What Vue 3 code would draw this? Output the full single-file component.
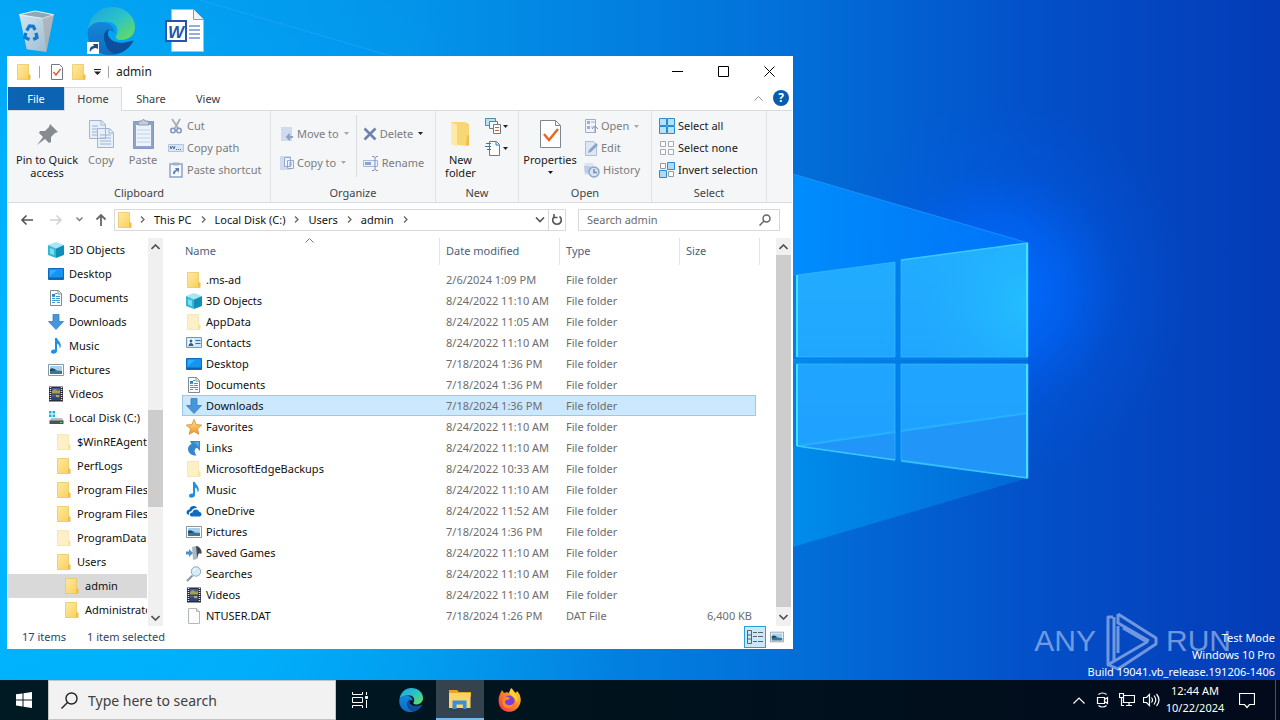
<script setup>
import { ref } from 'vue'

const tabs = ['Home', 'Share', 'View']
const crumbs = ['This PC', 'Local Disk (C:)', 'Users', 'admin']

const tree = [
  { name: '3D Objects', icon: 'cube', level: 0 },
  { name: 'Desktop', icon: 'desktop', level: 0 },
  { name: 'Documents', icon: 'doc', level: 0 },
  { name: 'Downloads', icon: 'down', level: 0 },
  { name: 'Music', icon: 'music', level: 0 },
  { name: 'Pictures', icon: 'pictures', level: 0 },
  { name: 'Videos', icon: 'videos', level: 0 },
  { name: 'Local Disk (C:)', icon: 'disk', level: 0 },
  { name: '$WinREAgent', icon: 'folder-dim', level: 1 },
  { name: 'PerfLogs', icon: 'folder', level: 1 },
  { name: 'Program Files', icon: 'folder', level: 1 },
  { name: 'Program Files (x86)', icon: 'folder', level: 1 },
  { name: 'ProgramData', icon: 'folder-dim', level: 1 },
  { name: 'Users', icon: 'folder', level: 1 },
  { name: 'admin', icon: 'folder', level: 2, active: true },
  { name: 'Administrator', icon: 'folder', level: 2 }
]

const folder = (name, icon, date) => ({ name, icon, date, type: 'File folder', size: '' })
const files = [
  folder('.ms-ad', 'folder', '2/6/2024 1:09 PM'),
  folder('3D Objects', 'cube', '8/24/2022 11:10 AM'),
  folder('AppData', 'folder-dim', '8/24/2022 11:05 AM'),
  folder('Contacts', 'contacts', '8/24/2022 11:10 AM'),
  folder('Desktop', 'desktop', '7/18/2024 1:36 PM'),
  folder('Documents', 'doc', '7/18/2024 1:36 PM'),
  folder('Downloads', 'down', '7/18/2024 1:36 PM'),
  folder('Favorites', 'star', '8/24/2022 11:10 AM'),
  folder('Links', 'link', '8/24/2022 11:10 AM'),
  folder('MicrosoftEdgeBackups', 'folder-dim', '8/24/2022 10:33 AM'),
  folder('Music', 'music', '8/24/2022 11:10 AM'),
  folder('OneDrive', 'cloud', '8/24/2022 11:52 AM'),
  folder('Pictures', 'pictures', '7/18/2024 1:36 PM'),
  folder('Saved Games', 'games', '8/24/2022 11:10 AM'),
  folder('Searches', 'lens', '8/24/2022 11:10 AM'),
  folder('Videos', 'videos', '8/24/2022 11:10 AM'),
  { name: 'NTUSER.DAT', icon: 'file', date: '7/18/2024 1:26 PM', type: 'DAT File', size: '6,400 KB' }
]
const selected = ref('Downloads')
</script>

<template>
  <div class="screen">
    <svg class="defs" aria-hidden="true">
      <defs>
        <linearGradient id="g-folder" x1="0" y1="0" x2="1" y2="1">
          <stop offset="0" stop-color="#ffe9a6" /><stop offset="1" stop-color="#f8cf55" />
        </linearGradient>
        <linearGradient id="g-edge1" x1="0" y1="0" x2="1" y2="1">
          <stop offset="0" stop-color="#1aa3e0" /><stop offset="0.5" stop-color="#2bc3c9" /><stop offset="1" stop-color="#6ee04a" />
        </linearGradient>
        <linearGradient id="g-edge2" x1="0" y1="0" x2="0" y2="1">
          <stop offset="0" stop-color="#1587d8" /><stop offset="1" stop-color="#0b6cc4" />
        </linearGradient>
        <linearGradient id="g-fox" x1="1" y1="0" x2="0" y2="1">
          <stop offset="0" stop-color="#ffe13b" /><stop offset="0.45" stop-color="#ff8a1f" /><stop offset="1" stop-color="#f0265e" />
        </linearGradient>
        <linearGradient id="g-bin" x1="0" y1="0" x2="1" y2="1">
          <stop offset="0" stop-color="#e4eef5" /><stop offset="1" stop-color="#a7b8c6" />
        </linearGradient>
        <linearGradient id="g-star" x1="0" y1="0" x2="0" y2="1">
          <stop offset="0" stop-color="#ffe08a" /><stop offset="1" stop-color="#f0942c" />
        </linearGradient>
      </defs>
      <symbol id="i-folder" viewBox="0 0 16 16">
        <path d="M1.500 .5h11v10l1.500.5v4.500H1.500z" fill="url(#g-folder)" stroke="#e9c153" stroke-width=".7" />
        <path d="M12 15.500v-4l1-1.500 1.300 1.500v4z" fill="#efc046" />
      </symbol>
      <symbol id="i-folder-dim" viewBox="0 0 16 16">
        <path d="M1.500 .5h11v10l1.500.5v4.500H1.500z" fill="#fdf0c6" stroke="#f3dfa4" stroke-width=".7" />
        <path d="M12 15.500v-4l1-1.500 1.300 1.500v4z" fill="#f6e3a8" />
      </symbol>
      <symbol id="i-cube" viewBox="0 0 16 16">
        <path d="M8 0l8 3-8 3.500L0 3z" fill="#a5e7f2" /><path d="M0 3l8 3.500V16l-8-3z" fill="#35b6d3" /><path d="M16 3L8 6.500V16l8-3z" fill="#0f8fb8" />
        <path d="M2 6l4 1.600v5.600l-4-1.600z" fill="#7fdcec" />
      </symbol>
      <symbol id="i-desktop" viewBox="0 0 16 16">
        <path d="M.5 2.500h15v11H.5z" fill="#1496f0" stroke="#1169ba" /><path d="M1 11.500h14V13H1z" fill="#0b61b3" /><path d="M2 4h7l-7 6z" fill="#32adff" />
      </symbol>
      <symbol id="i-doc" viewBox="0 0 16 16">
        <path d="M2.500.5h8l3 3v12h-11z" fill="#fff" stroke="#7f8b94" /><path d="M10 1v3h3" fill="none" stroke="#7f8b94" />
        <path d="M7 3.500h2M4 6.500h3m1 0h4M4 8.500h3m1 0h4M4 10.500h8M4 12.500h3m2 0h3" stroke="#3f9bd0" />
        <path d="M4 4h3v2H4z" fill="#2d83bd" />
      </symbol>
      <symbol id="i-down" viewBox="0 0 16 16">
        <path d="M5 .500h6v7h4.500L8 15.500.500 7.500H5z" fill="#4796dc" stroke="#357fc6" stroke-width=".8" />
      </symbol>
      <symbol id="i-music" viewBox="0 0 16 16">
        <path d="M7 0h2c.3 2.500 4 4 3.800 8-.1 1.200-.7 2-1.300 2.600C12 7.500 10.500 6 9 5.500V13c0 3-6 4-6 .8 0-2 2.400-2.700 4-2.200z" fill="#1c8fe8" />
      </symbol>
      <symbol id="i-pictures" viewBox="0 0 16 16">
        <path d="M.500 2.500h15v11H.500z" fill="#fff" stroke="#8b98a3" /><path d="M2 4h12v8H2z" fill="#a6d2ef" />
        <path d="M2 8c3-2 5 1 12 1v3H2z" fill="#3e7595" /><path d="M2 7c2-2 5 0 6 1l-3 1H2z" fill="#1d4b66" />
      </symbol>
      <symbol id="i-videos" viewBox="0 0 16 16">
        <path d="M1 .5h14v15H1z" fill="#2b2d38" /><path d="M2.500 1v14M13.500 1v14" stroke="#dfe3e8" stroke-width="1.500" stroke-dasharray="1 1" />
        <path d="M4 2h8v5.500H4zM4 8.500h8V14H4z" fill="#4e5f9e" /><path d="M4 5l3-2 3 2 2-1v3.500H4z" fill="#a2a053" /><path d="M4 11l3-1 3 2 2-1v3H4z" fill="#2e4778" /><path d="M8 9h3v2H8z" fill="#c5a657" />
      </symbol>
      <symbol id="i-disk" viewBox="0 0 16 16">
        <path d="M1 1h2.500v2.500H1zm3.500 0H7v2.500H4.500zM1 4.500h2.500V7H1zm3.500 0H7V7H4.500z" fill="#19b4dc" />
        <path d="M3 8h11l1.500 3H1.500z" fill="#b9bec2" /><path d="M1.500 10.500h14V14h-14z" fill="#4c5358" /><path d="M12 12h2v1h-2z" fill="#53e05a" />
      </symbol>
      <symbol id="i-contacts" viewBox="0 0 16 16">
        <path d="M.5 2.500h15v10H.5z" fill="#cfe7f8" stroke="#6a9cc4" /><path d="M2 4h6v7H2z" fill="#fff" /><circle cx="5" cy="6" r="1.500" fill="#335f85" /><path d="M2.500 11c0-4 5-4 5 0z" fill="#335f85" /><path d="M9.500 5.500h5m-5 3h5" stroke="#2f6fa8" />
      </symbol>
      <symbol id="i-star" viewBox="0 0 16 16">
        <path d="M8 .5l2.200 5.100 5.500.5-4.200 3.700 1.300 5.500L8 12.500l-4.800 2.800 1.300-5.500L.3 6.100l5.500-.5z" fill="url(#g-star)" stroke="#d58a35" stroke-width=".8" />
      </symbol>
      <symbol id="i-link" viewBox="0 0 16 16">
        <path d="M4 1h10v10l-3-3.200C8 9 8 12 10.500 15.500 6 16 2 13 2 9c0-2.500 1.500-4 3.500-5z" fill="#3686cd" /><path d="M8 2h5v5z" fill="#5ea7e3" />
      </symbol>
      <symbol id="i-cloud" viewBox="0 0 16 16">
        <path d="M1 11C-.5 8 2 6.500 3.500 6.500 4 2.500 9.500 2 11 5c-5-.5-5 3.500-6.500 3.500C2.500 9 3 11 3 12z" fill="#0b67ba" />
        <path d="M5.500 13.500C2.500 13 4 9 6.500 9.500c.5-4 6-3.500 6.500-.8 3.500.3 3 4.800.5 4.800z" fill="#0e6cc4" />
      </symbol>
      <symbol id="i-games" viewBox="0 0 16 16">
        <path d="M6 2l4-1 1 13-4 1z" fill="#aab8c1" /><path d="M10 1c4 0 7 6 5 8-1-1-2-1-3 1l-1 4z" fill="#41494f" />
        <path d="M0 6.500h3V4l4 4-4 4V9.500H0z" fill="#4b8fc7" />
      </symbol>
      <symbol id="i-lens" viewBox="0 0 16 16">
        <path d="M6.500 9.500L1 15" stroke="#8696a2" stroke-width="2" /><circle cx="10" cy="5.500" r="4.700" fill="#d3ecfb" stroke="#93a8b7" /><path d="M7.500 5a3 3 0 013-2.500" stroke="#fff" fill="none" />
      </symbol>
      <symbol id="i-file" viewBox="0 0 16 16">
        <path d="M2.500.5h8l3 3v12h-11z" fill="#fdfdfd" stroke="#b4b7ba" /><path d="M10.500.5v3h3" fill="none" stroke="#b4b7ba" />
      </symbol>
      <symbol id="i-caret" viewBox="0 0 5 3"><path d="M0 0h5L2.500 3z" fill="currentColor" /></symbol>
      <symbol id="i-edge" viewBox="0 0 48 48">
        <path d="M1 22C3 9 12 0 25 0c13 0 23 9 23 20 0 8-6 13-14 13-4 0-6-2-5-4 3-4 2-13-7-14C12 14 4 17 1 22z" fill="url(#g-edge1)" />
        <path d="M1 22c4-7 14-9 21-5 4 2 6 6 5 9-2-4-9-2-10 5-1 8 5 14 13 16C13 52-2 39 1 22z" fill="url(#g-edge2)" />
        <path d="M17 31c-1-4 2-8 5-9-4 7 3 18 22 12 2-.7 3 0 2 1-5 8-12 12-18 12-7-2-11-9-11-16z" fill="#0c4f9c" />
      </symbol>
    </svg>

    <main class="desktop">
      <svg class="wallpaper" viewBox="0 0 1280 680" preserveAspectRatio="none" aria-hidden="true">
        <defs>
          <linearGradient id="w-base" x1="0" x2="1" y1="0" y2="0">
            <stop offset="0" stop-color="#03a4f2" /><stop offset=".32" stop-color="#0394ea" /><stop offset=".62" stop-color="#026fd8" /><stop offset=".8" stop-color="#0351ca" /><stop offset="1" stop-color="#043bb6" />
          </linearGradient>
          <radialGradient id="w-cyan" gradientUnits="userSpaceOnUse" cx="0" cy="480" r="640">
            <stop offset="0" stop-color="#00b8ff" /><stop offset=".5" stop-color="#00b2fd" stop-opacity=".8" /><stop offset="1" stop-color="#00a0f0" stop-opacity="0" />
          </radialGradient>
          <linearGradient id="w-beam" gradientUnits="userSpaceOnUse" x1="200" x2="1028" y1="0" y2="0">
            <stop offset="0" stop-color="#0098ff" stop-opacity="0" /><stop offset=".7" stop-color="#0090ff" stop-opacity=".95" /><stop offset="1" stop-color="#007cff" stop-opacity=".7" />
          </linearGradient>
          <linearGradient id="w-low" gradientUnits="userSpaceOnUse" x1="340" x2="1028" y1="0" y2="0">
            <stop offset="0" stop-color="#009cf5" stop-opacity="0" /><stop offset=".65" stop-color="#0090ee" stop-opacity=".9" /><stop offset="1" stop-color="#0076dd" stop-opacity=".6" />
          </linearGradient>
          <radialGradient id="w-glow" gradientUnits="userSpaceOnUse" cx="1000" cy="290" r="190">
            <stop offset="0" stop-color="#006eff" /><stop offset=".35" stop-color="#0066fa" stop-opacity=".7" /><stop offset=".65" stop-color="#005df0" stop-opacity=".22" /><stop offset="1" stop-color="#0058e8" stop-opacity="0" />
          </radialGradient>
          <linearGradient id="w-pane" x1="0" y1="0" x2="0" y2="1">
            <stop offset="0" stop-color="#22adff" /><stop offset="1" stop-color="#1e9fff" />
          </linearGradient>
          <radialGradient id="w-shine" gradientUnits="userSpaceOnUse" cx="1028" cy="303" r="110">
            <stop offset="0" stop-color="#24c4ff" stop-opacity=".8" /><stop offset="1" stop-color="#24b4ff" stop-opacity="0" />
          </radialGradient>
        </defs>
        <path d="M0 0h1280v680H0z" fill="url(#w-base)" />
        <path d="M0 0h1280v680H0z" fill="url(#w-cyan)" />
        <path d="M780 60h440v440H780z" fill="url(#w-glow)" />
        <path d="M200 0l828 243v117H200z" fill="url(#w-beam)" />
        <path d="M340 360h688v118L340 680z" fill="url(#w-low)" />
        <path d="M200 0l828 243" stroke="#2aa5ff" stroke-width="1" opacity=".6" />
        <path d="M793 276l235-34v117H793zM793 364h235v115l-235-33z" fill="#0080ea" />
        <path d="M797 275l98-13v95h-98zM901 260l127-17v114H901zM797 364h98v96l-98-14zM901 364h127v114l-127-18z" fill="url(#w-pane)" />
        <path d="M901 260l127-17v114H901z" fill="url(#w-shine)" />
        <path d="M797 446l98-14v28zM901 431l127-18v65l-127-18z" fill="#2196f8" />
        <path d="M797 446l98-14m6-1l127-18" stroke="#27b8ff" stroke-width="2" opacity=".8" />
        <path d="M797 275l98-13v95h-98zM901 260l127-17v114H901zM797 364h98v96l-98-14zM901 364h127v114l-127-18z" fill="none" stroke="#3abaff" opacity=".7" />
        <path d="M797 275v82m0 7v82M1027 478V364m0-7V243" fill="none" stroke="#43e0ff" stroke-width="2" />
        <path d="M797 446l98 14m6 1l127 17M901 260l127-17" fill="none" stroke="#3fd0ff" stroke-width="1.500" opacity=".8" />
      </svg>

      <nav class="shortcuts" aria-label="Desktop">
        <button aria-label="Recycle Bin">
          <svg width="38" height="43" viewBox="0 0 40 46">
            <path d="M1 5l8 37 21 3 8-40-20-4z" fill="url(#g-bin)" opacity=".92" /><path d="M1 5l17-4 20 4-12 4z" fill="#90a9b8" stroke="#edf5fa" /><path d="M26 9l4 36 8-40z" fill="#a99e9c" opacity=".5" />
            <path d="M9 22l3-5 4 .5 2 4m1 3l1 5-4 2m-4 0l-5-2 1-5" fill="none" stroke="#1478cf" stroke-width="3.500" />
          </svg>
        </button>
        <button aria-label="Microsoft Edge">
          <svg width="50" height="50" viewBox="0 0 50 50">
            <use href="#i-edge" x="1" y="1" width="48" height="48" /><path d="M1 36h12v12H1z" fill="#fff" /><path d="M4 46c-1-4 1-6 4-6l-1-2h5v5l-2-1c-3 0-4 1-6 4z" fill="#1d4c8a" />
          </svg>
        </button>
        <button aria-label="Word document">
          <svg width="40" height="46" viewBox="0 0 40 46">
            <path d="M6.500 1.500h22l10 10v32h-32z" fill="#fff" stroke="#b4bdc8" /><path d="M28.500 1.500v10h10" fill="#f1f4f7" stroke="#8e99a5" />
            <path d="M24 18h11m-11 4h11m-11 4h11m-11 4h11" stroke="#2b5fb0" /><path d="M1 13h20v20H1z" fill="#fff" stroke="#2456a8" stroke-width="2" />
            <text x="11" y="30" text-anchor="middle" class="word-mark">W</text>
          </svg>
        </button>
      </nav>

      <div class="brand" aria-label="ANY RUN">
        <span>ANY</span>
        <svg width="56" height="60" viewBox="0 0 56 60" fill="none" stroke="currentColor" stroke-width="3" stroke-linejoin="round">
          <path d="M10 6H5v48l6-4V6M15 3v9l31 18M15 3l38 24v6L15 58l-9-4M20 17l24 14L8 52M15 15v27" />
        </svg>
        <span>RUN</span>
      </div>
      <p class="build">Test Mode<br />Windows 10 Pro<br />Build 19041.vb_release.191206-1406</p>

      <section class="window" aria-label="admin">
        <header class="titlebar">
          <svg width="16" height="16"><use href="#i-folder" /></svg>
          <i class="bar"></i>
          <button aria-label="Properties"><svg width="14" height="16" viewBox="0 0 14 16"><path d="M1.500.5h8l3 3v12h-11z" fill="#fff" stroke="#6f7a84" /><path d="M3.500 8l2.500 3 4.500-6" fill="none" stroke="#dd5f38" stroke-width="1.500" /></svg></button>
          <button aria-label="New folder"><svg width="16" height="16"><use href="#i-folder" /></svg></button>
          <button aria-label="Customize toolbar"><svg width="7" height="6" viewBox="0 0 7 6"><path d="M0 0h7v1H0zM0 2.500h7L3.500 6z" fill="#222" /></svg></button>
          <i class="bar"></i>
          <h1>admin</h1>
          <div class="caption">
            <button aria-label="Minimize"><svg width="11" height="11"><path d="M0 5.500h11" stroke="#000" /></svg></button>
            <button aria-label="Maximize"><svg width="11" height="11"><path d="M.5.5h10v10H.5z" fill="none" stroke="#000" /></svg></button>
            <button aria-label="Close"><svg width="11" height="11"><path d="M.5.5l10 10m0-10l-10 10" stroke="#000" /></svg></button>
          </div>
        </header>

        <div class="tabs">
          <button class="file-tab">File</button>
          <button v-for="(t, i) in tabs" :key="t" :class="{ on: i === 0 }">{{ t }}</button>
          <button class="collapse" aria-label="Collapse ribbon"><svg width="9" height="5" viewBox="0 0 9 5"><path d="M.5 4.500l4-4 4 4" fill="none" stroke="#8c8c8c" /></svg></button>
          <button class="help" aria-label="Help">?</button>
        </div>

        <div class="ribbon">
          <section class="group clipboard">
            <div class="tools">
              <button class="big pin">
                <svg width="32" height="32" viewBox="0 0 32 32"><path d="M19 6l8 8-3 1-4 4v5l-2 1-4-4-8 6 6-8-4-4 1-2h5l4-4z" fill="#858b90" /></svg>
                <span>Pin to Quick access</span>
              </button>
              <button class="big off copy">
                <svg width="32" height="32" viewBox="0 0 32 32" fill="#e7effa" stroke="#a0b4d4"><path d="M4.500 2.500h12l4 4v14h-16zM12.500 10.500h12l4 4v15h-16z" /><path d="M16 3v4h4M24 11v4h4M7 8h6M7 11h5M7 14h5M7 17h5M15 17h11M15 20h11M15 23h11M15 26h11" fill="none" /></svg>
                <span>Copy</span>
              </button>
              <button class="big off paste">
                <svg width="32" height="32" viewBox="0 0 32 32"><path d="M6.500 3.500h20v27h-20z" fill="#8fa3c8" stroke="#8498bf" /><path d="M9 7h15v21H9z" fill="#edf3fb" /><path d="M11 7l1-4h3l1.500-2L18 3h3l1 4z" fill="#c3cddd" stroke="#8b9bb5" /><path d="M10 12h13M10 16h13M10 20h13M10 24h13" stroke="#c0d0e8" /></svg>
                <span>Paste</span>
              </button>
              <div class="small three off">
                <button><svg width="16" height="16" viewBox="0 0 16 16" fill="none"><path d="M4 1l6 9M12 1L7 10" stroke="#a4acb6" stroke-width="1.800" /><circle cx="5" cy="12.500" r="2.300" stroke="#8195be" stroke-width="1.500" /><circle cx="11" cy="12.500" r="2.300" stroke="#8195be" stroke-width="1.500" /></svg>Cut</button>
                <button><svg width="16" height="16" viewBox="0 0 16 16"><path d="M.5 4.500h15v7H.5z" fill="#d8e6f6" stroke="#b4c6de" /><path d="M2 6l1 3 1.500-3L6 9l1-3" fill="none" stroke="#536f9f" /><path d="M8 9.500h6" stroke="#536f9f" stroke-dasharray="1 1" /></svg>Copy path</button>
                <button><svg width="16" height="16" viewBox="0 0 16 16"><path d="M2 2h12v13H2z" fill="#f5f9fe" stroke="#8fa3c8" stroke-width="1.500" /><path d="M5 .5h6v3H5z" fill="#a3b1c8" /><path d="M5 12c0-3 1-4 3-4L7 6h4v5l-1-2c-2 0-3 1-3 3z" fill="#6281b5" /></svg>Paste shortcut</button>
              </div>
            </div>
            <h2>Clipboard</h2>
          </section>

          <section class="group organize">
            <div class="tools">
              <div class="small two off">
                <button><svg width="14" height="16" viewBox="0 0 14 16"><path d="M1 1h11v14H1z" fill="#cfdbee" /><path d="M13 11H7m3-3l-3 3 3 3" stroke="#8ba1c8" fill="none" stroke-width="1.800" /></svg>Move to<svg class="caret" width="5" height="3"><use href="#i-caret" /></svg></button>
                <button><svg width="14" height="16" viewBox="0 0 14 16"><path d="M0 1h11v14H0z" fill="#cfdbee" /><path d="M4.500 2.500h6v9h-6zM7.500 5.500h6v8h-6z" fill="#eff4fb" stroke="#93a8ce" /><path d="M9 8h3m-3 2h3" stroke="#93a8ce" /></svg>Copy to<svg class="caret" width="5" height="3"><use href="#i-caret" /></svg></button>
              </div>
              <div class="small two off del">
                <button><svg width="14" height="16" viewBox="0 0 14 16"><path d="M1.500 2.500l11 11m0-11l-11 11" stroke="#6c83ab" stroke-width="2.500" /></svg>Delete<svg class="caret dark" width="5" height="3"><use href="#i-caret" /></svg></button>
                <button><svg width="16" height="16" viewBox="0 0 16 16"><path d="M.5 5.500h14v6H.5z" fill="#eaf1fa" stroke="#a4b7d8" /><path d="M2 7h6v3H2z" fill="#8da5ce" /><path d="M9 1.500h2l1 1 1-1h2M9 15.500h2l1-1 1 1h2M12 2v13" fill="none" stroke="#7e93b7" /></svg>Rename</button>
              </div>
            </div>
            <h2>Organize</h2>
          </section>

          <section class="group new">
            <div class="tools">
              <button class="big new-folder">
                <svg width="32" height="32" viewBox="0 0 32 32"><path d="M6 4h14l4 2v18h-2v4L6 26z" fill="#f8d674" /><path d="M6 4l6 3v22l-6-3z" fill="#ffe9a8" /><path d="M22 18l2-2v12l-3-1z" fill="#edc044" /></svg>
                <span>New folder</span>
              </button>
              <div class="small three icons">
                <button aria-label="New item"><svg width="17" height="16" viewBox="0 0 17 16"><path d="M.5.5h10v7H.5z" fill="#b6e4f5" stroke="#538da8" /><path d="M4.500 3.500h8v7h-8z" fill="#f5f9fc" stroke="#6d7c87" /><path d="M8.500 6.500h7v9h-7z" fill="#fff" stroke="#6d7c87" /><path d="M10 9.500h4m-4 3h4" stroke="#d65b45" /></svg><svg class="caret dark" width="5" height="3"><use href="#i-caret" /></svg></button>
                <button aria-label="Easy access"><svg width="17" height="16" viewBox="0 0 17 16"><path d="M4.500 1.500h7l3 3v11h-10z" fill="#fff" stroke="#6d7c87" /><path d="M11 2v3h3M1 3.500h5M0 6.500h6M2 9.500h4" stroke="#3579af" fill="none" /></svg><svg class="caret dark" width="5" height="3"><use href="#i-caret" /></svg></button>
              </div>
            </div>
            <h2>New</h2>
          </section>

          <section class="group open">
            <div class="tools">
              <button class="big">
                <svg width="32" height="32" viewBox="0 0 32 32"><path d="M6.500 2.500h15l5 5v22h-20z" fill="#fff" stroke="#7c8790" /><path d="M21.500 2.500v5h5" fill="none" stroke="#7c8790" /><path d="M10 16l5 6 9-11" fill="none" stroke="#e66a25" stroke-width="2.500" /></svg>
                <span>Properties</span>
                <svg class="under" width="5" height="3"><use href="#i-caret" /></svg>
              </button>
              <div class="small three off">
                <button><svg width="14" height="16" viewBox="0 0 14 16"><path d="M1.500 1.500h10v13h-10z" fill="#f1f5fb" stroke="#9faed0" /><path d="M3 3h3v3H3zm0 5h3v3H3z" fill="#9aafd8" /><path d="M7 4h4M7 9h3" stroke="#9aafd8" /><path d="M11 15V8m-3 3l3-3 3 3" stroke="#8297bd" fill="none" /></svg>Open<svg class="caret" width="5" height="3"><use href="#i-caret" /></svg></button>
                <button><svg width="14" height="16" viewBox="0 0 14 16"><path d="M1.500 1.500h8l3 3v11h-11z" fill="#dce7f5" stroke="#afbed6" /><path d="M4 13l1-3 7-7 2 2-7 7z" fill="#8ba2ca" /></svg>Edit</button>
                <button><svg width="16" height="16" viewBox="0 0 16 16"><path d="M.5 1h9v12h-9z" fill="#dbe5f2" /><path d="M0 4h6l2 3v4H1z" fill="#bccce5" /><circle cx="10" cy="10" r="5" fill="#d8e4f3" stroke="#8fa4c8" stroke-width="1.500" /><path d="M10 7v3.500h3" fill="none" stroke="#7189b4" stroke-width="1.500" /></svg>History</button>
              </div>
            </div>
            <h2>Open</h2>
          </section>

          <section class="group select">
            <div class="tools">
              <div class="small three">
                <button><svg width="16" height="16" viewBox="0 0 16 16"><path d="M.5.5h7v7h-7zm8 0h7v7h-7zm-8 8h7v7h-7zm8 0h7v7h-7z" fill="#b6e2fb" stroke="#2a8bd0" /></svg>Select all</button>
                <button><svg width="16" height="16" viewBox="0 0 16 16"><path d="M1.500 1.500h5v5h-5zm8 0h5v5h-5zm-8 8h5v5h-5zm8 0h5v5h-5z" fill="#fff" stroke="#a3aab0" /></svg>Select none</button>
                <button><svg width="16" height="16" viewBox="0 0 16 16"><path d="M1.500 1.500h5v5h-5zm8 8h5v5h-5z" fill="#fff" stroke="#8f9ba5" /><path d="M8.500.5h7v7h-7zm-8 8h7v7h-7z" fill="#a9dbfa" stroke="#2a8bd0" /></svg>Invert selection</button>
              </div>
            </div>
            <h2>Select</h2>
          </section>
        </div>

        <div class="navrow">
          <button class="nav" aria-label="Back"><svg width="14" height="12" viewBox="0 0 14 12" fill="none" stroke="#555" stroke-width="1.600"><path d="M13 6H2m4.500-4.500L2 6l4.500 4.500" /></svg></button>
          <button class="nav" aria-label="Forward"><svg width="14" height="12" viewBox="0 0 14 12" fill="none" stroke="#cfcfcf" stroke-width="1.400"><path d="M1 6h11M7.500 1.500L12 6l-4.500 4.500" /></svg></button>
          <button class="nav narrow" aria-label="Recent locations"><svg width="7" height="5" viewBox="0 0 7 5" fill="none" stroke="#777" stroke-width="1.400"><path d="M.5.5l3 3 3-3" /></svg></button>
          <button class="nav up" aria-label="Up"><svg width="12" height="14" viewBox="0 0 12 14" fill="none" stroke="#666" stroke-width="1.800"><path d="M6 13V2M1.500 6.500L6 2l4.500 4.500" /></svg></button>
          <div class="address">
            <svg width="16" height="16"><use href="#i-folder" /></svg>
            <svg class="chev" width="5" height="7" viewBox="0 0 5 7"><path d="M1 .5l3 3-3 3" /></svg>
            <template v-for="c in crumbs" :key="c">
              <button>{{ c }}</button>
              <svg class="chev" width="5" height="7" viewBox="0 0 5 7"><path d="M1 .5l3 3-3 3" /></svg>
            </template>
            <button class="history" aria-label="Previous locations"><svg width="10" height="6" viewBox="0 0 10 6" fill="none" stroke="#555" stroke-width="1.600"><path d="M1 .5l4 4 4-4" /></svg></button>
            <button class="refresh" aria-label="Refresh"><svg width="12" height="12" viewBox="0 0 12 12" fill="none" stroke="#555" stroke-width="1.600"><path d="M8.500 2.500a4.300 4.300 0 11-5 0M3 0v3.500h3.500" /></svg></button>
          </div>
          <label class="search">
            <input type="text" placeholder="Search admin" aria-label="Search admin" />
            <svg width="12" height="12" viewBox="0 0 12 12" fill="none" stroke="#666" stroke-width="1.500"><circle cx="7.500" cy="4.500" r="3.500" /><path d="M5 7l-4.500 4.500" /></svg>
          </label>
        </div>

        <div class="body">
          <nav class="tree" aria-label="Folders">
            <a v-for="(n, i) in tree" :key="i" href="#" :class="['level-' + n.level, { active: n.active }]">
              <svg width="16" height="16"><use :href="'#i-' + n.icon" /></svg>{{ n.name }}
            </a>
          </nav>
          <div class="scroll tree-scroll">
            <button aria-label="Scroll up"><svg width="9" height="6" viewBox="0 0 9 6"><path d="M.5 5l4-4 4 4" /></svg></button>
            <i class="thumb"></i>
            <button aria-label="Scroll down"><svg width="9" height="6" viewBox="0 0 9 6"><path d="M.5 1l4 4 4-4" /></svg></button>
          </div>
          <div class="pane">
            <table>
              <thead>
                <tr>
                  <th class="c-name">Name<svg class="sort" width="9" height="5" viewBox="0 0 9 5"><path d="M.5 4.500l4-4 4 4" fill="none" stroke="#777" /></svg></th>
                  <th class="c-date">Date modified</th>
                  <th class="c-type">Type</th>
                  <th class="c-size">Size</th>
                </tr>
              </thead>
              <tbody>
                <tr v-for="f in files" :key="f.name" :class="{ selected: f.name === selected }" @click="selected = f.name">
                  <td class="name"><svg width="16" height="16"><use :href="'#i-' + f.icon" /></svg>{{ f.name }}</td>
                  <td>{{ f.date }}</td>
                  <td>{{ f.type }}</td>
                  <td class="size">{{ f.size }}</td>
                </tr>
              </tbody>
            </table>
          </div>
          <div class="scroll pane-scroll">
            <button aria-label="Scroll up"><svg width="9" height="6" viewBox="0 0 9 6"><path d="M.5 5l4-4 4 4" /></svg></button>
            <i class="thumb"></i>
            <button aria-label="Scroll down"><svg width="9" height="6" viewBox="0 0 9 6"><path d="M.5 1l4 4 4-4" /></svg></button>
          </div>
        </div>

        <footer class="status">
          <span>17 items</span><span>1 item selected</span>
          <button class="view on" aria-label="Details view"><svg width="16" height="14" viewBox="0 0 16 14" fill="none" stroke="#59636b"><path d="M.5.5h4v13h-4zM.5 5h4m-4 4h4" /><path d="M6 2.500h4m1 0h5m-10 4h4m1 0h5m-10 5h4m1 0h5" /></svg></button>
          <button class="view" aria-label="Large icons view"><svg width="14" height="14"><use href="#i-pictures" /></svg></button>
        </footer>
      </section>
    </main>

    <footer class="taskbar">
      <button class="start" aria-label="Start"><svg width="16" height="16" viewBox="0 0 16 16" fill="#fff"><path d="M0 2.300L6.500 1.400v6H0zM7.500 1.200L16 0v7.400H7.500zM0 8.500h6.500v6L0 13.600zM7.500 8.500H16V16l-8.500-1.200z" /></svg></button>
      <label class="finder">
        <svg width="17" height="17" viewBox="0 0 17 17" fill="none" stroke="#222" stroke-width="1.400"><circle cx="10.500" cy="6.500" r="5.500" /><path d="M6.500 10.500L.5 16.500" /></svg>
        <input type="text" placeholder="Type here to search" aria-label="Type here to search" />
      </label>
      <div class="apps">
        <button class="taskview" aria-label="Task View"><svg width="17" height="16" viewBox="0 0 17 16" fill="none" stroke="#fff"><path d="M.5 0v2.500h10V0M.5 5.500h10v5H.5zM.5 16v-2.500h10V16M14.500 0v3m0 5v8" /><path d="M13.500 4.500h2v2h-2z" fill="#fff" /></svg></button>
        <button aria-label="Microsoft Edge"><svg width="24" height="24"><use href="#i-edge" /></svg></button>
        <button class="running" aria-label="File Explorer"><svg width="22" height="20" viewBox="0 0 22 20"><path d="M0 1h8l2 2h12v5H0z" fill="#e9a521" /><path d="M0 4h21.500v15H0z" fill="#fdd46a" /><path d="M3.500 20v-8.500h14V20h-3.500v-4.500H7.500V20z" fill="#3a8fd8" /></svg></button>
        <button aria-label="Firefox"><svg width="24" height="24" viewBox="0 0 24 24"><path d="M3 6l2-4 2 3c2-1 4-1 5 0l2-5c2 1 3 4 5 5l1-2c4 4 5 10 2 15-5 9-18 7-20-2-1-4 0-8 1-10z" fill="url(#g-fox)" /><circle cx="12" cy="13" r="5.500" fill="#7a3fdc" /><path d="M6 10c3-2 5-1 7 0-1 3-5 1-5 4 0 3 6 5 9 1-1 6-9 7-11 2-1-2-1-5 0-7z" fill="#ff8a20" /><path d="M14 1c4 4 8 7 6 14-1-5-4-6-7-9-1-2 0-4 1-5z" fill="#ffd335" /></svg></button>
      </div>
      <div class="tray">
        <button aria-label="Show hidden icons"><svg width="12" height="7" viewBox="0 0 12 7"><path d="M.5 6.500l5.500-5.500 5.500 5.500" /></svg></button>
        <button aria-label="Meet Now"><svg width="14" height="16" viewBox="0 0 14 16"><path d="M1.500 5.500h7v6h-7zM8.500 7.500l3-2v6l-3-2M2.500 2.500c2-2 6-2 8 0M2.500 13.500c2 2 6 2 8 0" /></svg></button>
        <button aria-label="Network"><svg width="16" height="14" viewBox="0 0 16 14"><path d="M5 2.500h10.500v7H4.500V5M7 12.500h6M10 10v2M.5.5h4v4h-4zM2.500 4.500v8H5" /></svg></button>
        <button aria-label="Volume"><svg width="17" height="14" viewBox="0 0 17 14"><path d="M.5 4.500h3l3-3v11l-3-3h-3zM8.500 4.500q2 2.500 0 5M11 2.500q3.500 4.500 0 9M13.500 1q5 6 0 12" /></svg></button>
        <button class="clock">12:44 AM<br />10/22/2024</button>
        <button class="notes" aria-label="Notifications"><svg width="16" height="17" viewBox="0 0 16 17"><path d="M.5 1.500h15v11h-5l-2.500 3-2.500-3h-5z" /></svg></button>
      </div>
    </footer>
  </div>
</template>

<style>
html, body { margin: 0; }
</style>

<style scoped>
.screen { height: 100vh; display: flex; flex-direction: column; overflow: hidden; font: 11px/14px "Noto Sans", "Open Sans", sans-serif; color: #1a1a1a; }
.screen *, .screen *::before, .screen *::after { box-sizing: border-box; }
.defs { position: absolute; width: 0; height: 0; }
button { font: inherit; color: inherit; background: none; border: 0; padding: 0; margin: 0; display: flex; align-items: center; justify-content: center; white-space: nowrap; }
input { font: inherit; color: inherit; border: 0; outline: 0; background: none; padding: 0; min-width: 0; flex: 1; }
svg { display: block; flex: none; }
h1, h2, p { margin: 0; font: inherit; }

.desktop { position: relative; flex: 1; min-height: 0; overflow: hidden; }
.wallpaper { position: absolute; inset: 0; width: 100%; height: 100%; }
.shortcuts { position: relative; display: flex; gap: 28px; padding: 6px 14px; align-items: center; }
.shortcuts button { width: 46px; height: 50px; }
.word-mark { font: italic bold 17px "Liberation Sans", sans-serif; fill: #2456a8; }
.brand { position: absolute; right: 49px; bottom: 9px; display: flex; align-items: center; gap: 7px; color: #b9cdf1; opacity: .6; font: 30px/60px "Liberation Sans", sans-serif; }
.build { position: absolute; right: 5px; bottom: 0; text-align: right; line-height: 17px; color: #fff; }

.window { position: absolute; left: 7px; right: 487px; top: 56px; bottom: 31px; background: #fff; border: 1px solid #fff; display: flex; flex-direction: column; border-top: 0; }
.titlebar { height: 31px; display: flex; align-items: center; padding-left: 8px; flex: none; }
.titlebar .bar { width: 1px; height: 12px; background: #a5a5a5; margin: 0 10px 0 7px; }
.titlebar button { margin-right: 7px; }
.titlebar h1 { font-size: 12px; }
.titlebar button + .bar { margin: 0 7px 0 0; }
.caption { margin-left: auto; display: flex; }
.titlebar .caption button { width: 46px; height: 30px; margin: 0; }

.tabs { height: 24px; flex: none; display: flex; border-bottom: 1px solid #dadbdc; color: #3c3c3c; }
.tabs button { width: 56px; height: 24px; margin-right: 1px; padding-bottom: 1px; }
.tabs .file-tab { background: #0b63b2; color: #fff; margin: 0; height: 23px; padding: 0; }
.tabs .on { width: 58px; background: #f5f6f7; border: 1px solid #dadbdc; border-bottom: 0; padding-bottom: 2px; }
.tabs .collapse { margin-left: auto; width: 16px; }
.tabs .help { width: 16px; height: 16px; margin: 3px 3px 0 6px; padding: 0; border-radius: 8px; background: #0a5cad; color: #fff; font-weight: bold; font-size: 12px; }

.ribbon { height: 92px; flex: none; display: flex; background: #f5f6f7; border-bottom: 1px solid #dadbdc; }
.group { display: flex; flex-direction: column; border-right: 1px solid #e2e3e4; }
.group h2 { margin-top: auto; height: 16px; text-align: center; color: #444; }
.clipboard { width: 263px; }
.organize { width: 165px; }
.new { width: 83px; }
.open { width: 133px; }
.select { width: 115px; }
.tools { display: flex; padding-top: 4px; }
.big { flex-direction: column; justify-content: flex-start; width: 62px; padding-top: 3px; line-height: 13px; white-space: normal; }
.big span { margin-top: 3px; }
.big .under { margin-top: 5px; }
.clipboard .tools { padding-left: 4px; }
.pin { width: 70px; }
.copy { width: 38px; }
.paste { width: 46px; }
.new-folder { width: 49px; }
.off { color: #7a7c80; }
.small { display: flex; flex-direction: column; margin-left: 5px; }
.clipboard .small { margin-left: 2px; }
.small button { height: 22px; gap: 3px; justify-content: flex-start; }
.two { padding-top: 4px; }
.two button { height: 29px; }
.caret { margin-left: 2px; color: #a4a7ab; }
.caret.dark { color: #222; }
.organize .small { margin-left: 9px; }
.organize .del { border-left: 1px solid #dcdddf; padding-left: 6px; margin-left: 7px; }
.new .icons { margin-left: 0; }
.new .icons button { gap: 1px; }
.new .icons .caret { margin: 0; }
.open .small { margin-left: 3px; }
.select .small { margin-left: 7px; }

.navrow { height: 35px; flex: none; display: flex; align-items: center; padding: 0 12px 2px 4px; }
.nav { width: 29px; height: 22px; }
.narrow { width: 19px; }
.up { width: 23px; margin-right: 2px; }
.address { flex: 1; height: 22px; display: flex; align-items: center; border: 1px solid #d9d9d9; padding-left: 2px; color: #111; }
.address > svg:first-child { margin-right: 7px; }
.address > button { padding: 0 9px; height: 20px; }
.chev { fill: none; stroke: #666; stroke-width: 1.300px; }
.address .history { margin-left: auto; padding: 0; width: 16px; }
.address .refresh { width: 17px; padding: 0; border-left: 1px solid #d9d9d9; }
.search { width: 202px; height: 22px; margin-left: 12px; padding: 0 8px; display: flex; align-items: center; border: 1px solid #d9d9d9; }
.search input::placeholder { color: #6b6b6b; opacity: 1; }

.body { flex: 1; min-height: 0; display: flex; }
.tree { width: 139px; overflow: hidden; }
.tree a { height: 24px; display: flex; align-items: center; gap: 5px; color: #111; text-decoration: none; white-space: nowrap; }
.tree .level-0 { padding-left: 40px; }
.tree .level-1 { padding-left: 48px; }
.tree .level-2 { padding-left: 56px; }
.tree .active { background: #d9d9d9; }
.scroll { width: 15px; background: #f0f0f0; display: flex; flex-direction: column; flex: none; }
.scroll button { height: 17px; flex: none; }
.scroll path { fill: none; stroke: #505050; stroke-width: 1.600px; }
.thumb { background: #cdcdcd; }
.tree-scroll { margin-left: 1px; }
.tree-scroll .thumb { flex: none; height: 25%; margin: auto 0 102px; }
.pane-scroll .thumb { flex: 1; }
.pane-scroll { margin-right: 1px; }
.pane-scroll button:last-child { height: 19px; }
.pane { flex: 1; min-width: 0; padding: 0 20px 0 19px; }
table { width: 100%; table-layout: fixed; border-collapse: separate; border-spacing: 0; }
th { position: relative; font-weight: normal; text-align: left; height: 31px; padding: 0 0 5px 6px; color: #4c607a; }
th::after { content: ""; position: absolute; right: 0; top: 0; height: 27px; border-right: 1px solid #e5e5e5; }
.c-date, .c-type { width: 120px; }
.c-size { width: 76px; }
.c-size::after { right: -4px; }
th.c-name { padding-left: 3px; }
.sort { position: absolute; top: 0; left: calc(50% - 6px); }
td { height: 21px; padding: 0 0 0 6px; color: #6d6d6d; white-space: nowrap; }
td.name { padding-left: 4px; color: #111; line-height: 20px; display: flex; align-items: center; gap: 4px; }
td.size { text-align: right; padding: 0 4px 0 0; }
.selected td { background: #cce8ff; border: solid #99c9ef; border-width: 1px 0; }
.selected td.name { border-left-width: 1px; padding-left: 3px; }
.selected td.size { border-right-width: 1px; }

.status { height: 22px; flex: none; display: flex; align-items: center; padding: 0 4px 0 14px; color: #2c4668; }
.status span { margin-right: 21px; }
.view { width: 22px; height: 22px; }
.view.on { margin-left: auto; background: #cbe8f6; border: 1px solid #26a0da; }

.taskbar { height: 40px; flex: none; display: flex; background: #00131d linear-gradient(90deg, #001a24, #00131d 50%, #020a1c); color: #fff; }
.start { width: 48px; }
.finder { width: 288px; display: flex; align-items: center; gap: 10px; padding: 0 12px; background: #f2f2f2; border: 1px solid #c4c4c4; font-size: 14px; color: #333; }
.finder input::placeholder { color: #404040; opacity: 1; }
.apps { display: flex; gap: 1px; }
.apps button { width: 48px; }
.apps .taskview { width: 50px; padding-right: 2px; }
.apps .running { background: #34434d; border-bottom: 2px solid #76b9ed; }
.tray { margin-left: auto; display: flex; margin-right: 4px; padding-right: 8px; border-right: 1px solid #4b535e; }
.tray button { width: 24px; }
.tray path { fill: none; stroke: #fff; stroke-width: 1.200px; }
.tray .clock { width: 64px; display: block; line-height: 17px; padding-bottom: 2px; }
.tray .notes { width: 40px; }
</style>
